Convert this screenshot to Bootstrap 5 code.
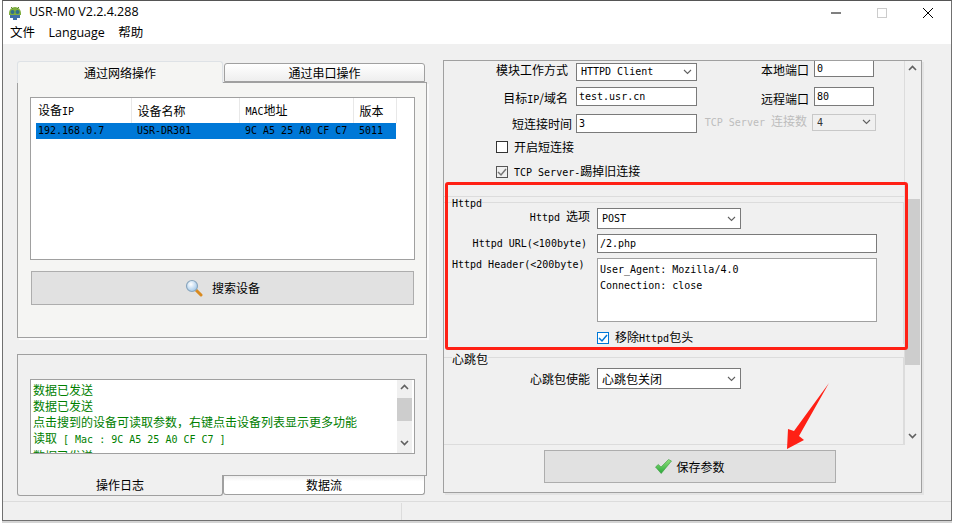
<!DOCTYPE html>
<html lang="zh-CN">
<head>
<meta charset="utf-8">
<title>USR-M0</title>
<link href="https://cdn.jsdelivr.net/npm/bootstrap@5.3.0/dist/css/bootstrap.min.css" rel="stylesheet">
<style>
html,body{margin:0;height:523px;overflow:hidden;background:#fff}
body{font-family:"Noto Sans CJK SC",sans-serif;font-size:12px;line-height:16px;color:#000}
.lt{font-family:"DejaVu Sans Mono","Noto Sans CJK SC",monospace;font-size:10px}
.win{margin-left:2px;width:950px;height:521px;background:#f0f0f0;border:1px solid #707070;border-top-color:#555;box-shadow:0 2px 0 #d4d4d4}
.tbar{height:21px;background:#fff;font-family:"Open Sans",sans-serif;font-size:12.5px}
.appico{margin-left:4px;margin-right:6px;margin-top:3px}
.wbtn{width:46px;height:21px;padding-top:2px}
.menubar{height:22px;background:#fff;font-family:"Open Sans","Noto Sans CJK SC",sans-serif;font-size:12.5px;padding-left:7px;gap:13.5px}
.client{height:457px;padding:17px 0 0 14px;gap:16px}
.leftc{width:410px}
.wtabs{border:0;flex-wrap:nowrap;height:21px;align-items:flex-start}
.wtabs .nav-link{font-size:12px;line-height:17px;color:#000;padding:0;text-align:center;border:1px solid #a0a0a0;background:linear-gradient(#fff,#eee);border-radius:3px 3px 0 0;height:19px;width:201px;margin:2px 0 0 1px}
.wtabs .nav-link.active{width:206px;height:22px;margin:0;background:#f5f5f3;border-bottom:0;position:relative;z-index:2;line-height:21px}
.panel1{height:256px;background:#f5f5f3;border:1px solid #a0a0a0;padding:14px 12px 0;box-shadow:2px 2px 0 #fafafa}
.devlist{height:163px;width:385px;background:#fff;border:1px solid #a0a0a0;padding-left:5px}
.devtbl{width:360px;table-layout:fixed;margin:0}
.devtbl.table>:not(caption)>*>*{padding:0 0 0 6px;border:0;background:transparent;color:#000;box-shadow:none}
.devtbl.table>thead>tr>th{height:25px;font-weight:400;border-right:1px solid #e8e8e8;vertical-align:middle;white-space:nowrap}
.devtbl.table>tbody>tr>td{height:16px;background:#0078d7;color:#000;white-space:nowrap;vertical-align:middle}
.devtbl.table>*>tr>*:first-child{padding-left:2px}
.winbtn{display:flex;align-items:center;justify-content:center;background:#e1e1e1;border:1px solid #adadad;border-radius:0;color:#000;font-size:12px;line-height:16px;padding:0}
.winbtn:hover{background:#e1e1e1;border-color:#adadad;color:#000}
.srch{width:383px;height:34px;margin:11px 0 0 1px;gap:9px}
.save{width:292px;height:33px;margin:5px 0 0 100px;gap:4px}
.panel2{height:122px;margin-top:16px;background:#f0f0f0;border:1px solid #a0a0a0;padding:24px 12px 0}
.logbox{width:385px;height:75px;background:#fff;border:1px solid #a0a0a0;color:#008000}
.logtext{padding:2px 0 0 2px;overflow:hidden;white-space:nowrap}
.sbar{width:15px;background:#f0f0f0;flex:none;margin-right:2px}
.sthumb{height:23px;margin-top:8px;background:#cdcdcd}
.schev{margin-top:19px}
.btabs{height:21px;align-items:flex-start;flex-wrap:nowrap;border:0}
.btabs .nav-link{font-size:12px;color:#000;padding:0;text-align:center;line-height:17px;height:19px;width:202px;border:1px solid #a0a0a0;border-top:0;border-radius:0 0 3px 3px;background:linear-gradient(#eee,#fff 30%);margin-left:0}
.btabs .nav-link.active{width:206px;height:21px;background:#f0f0f0;line-height:20px;margin-top:-1px;position:relative;z-index:2}
.rightc{width:479px;height:433px;border:1px solid #a0a0a0;box-shadow:2px 2px 0 #e4e4e4;margin-top:-1px;position:relative}
.rscroll{height:384px;width:477px}
.rinner{width:461px;height:384px;overflow:hidden;border-right:1px solid #dcdcdc;border-bottom:1px solid #dcdcdc}
.rbar{width:16px;position:relative}
.rthumb{height:166px;margin:138px 1px 0 0;background:#cdcdcd}
.rup{position:absolute;top:4px;left:3px}
.rdn{position:absolute;top:372px;left:3px}
.lab{flex:none;text-align:right;white-space:nowrap}
.lift{margin-bottom:4px}
.drop{margin-top:4px}
.wctl.form-control,.wctl.form-select{border-radius:0;border:1px solid #7a7a7a;min-height:0;box-shadow:none;color:#000;background-color:#fff;flex:none;line-height:16px}
.wctl.form-control{padding:0 2px;font-family:"DejaVu Sans Mono","Noto Sans CJK SC",monospace;font-size:10px}
.wctl.form-select{padding:0 16px 0 4px;font-size:10px;font-family:"DejaVu Sans Mono","Noto Sans CJK SC",monospace;background-image:url("data:image/svg+xml,%3csvg xmlns='http://www.w3.org/2000/svg' viewBox='0 0 9 6'%3e%3cpath fill='none' stroke='%23606060' stroke-width='1.1' d='M1 1l3.5 3.5L8 1'/%3e%3c/svg%3e");background-size:9px 6px;background-position:right 4px center}
.wctl.cjk{font-family:"Noto Sans CJK SC",sans-serif;font-size:12px}
.wctl.off{background-color:#f0f0f0;border-color:#c8c8c8;color:#333}
.row1{height:22px}.row2{height:19px;margin-top:4px}.row3{height:19px;margin-top:8px}
.w124{width:132px;padding-right:8px}
.w120{width:121px;height:18px}
.h19{height:19px}
.w113{width:112px}
.w59{width:60px;margin-left:5px}
.up7{margin-top:-7px;height:17px}
.dim{color:#bdbdbd}
.ckrow{height:12px;margin-left:52px;gap:6px}
.wck.form-check-input{width:12px;height:12px;margin:0;border:1px solid #333;border-radius:0;background-color:#fff;flex:none;box-shadow:none}
.wck.form-check-input:checked{background-color:#f0f0f0;border-color:#555;background-image:url("data:image/svg+xml,%3csvg xmlns='http://www.w3.org/2000/svg' viewBox='0 0 12 12'%3e%3cpath fill='none' stroke='%23777' stroke-width='1.5' d='M2 6l3 3 5-6'/%3e%3c/svg%3e");background-size:12px}
.wck.blue.form-check-input:checked{background-color:#fff;border-color:#0078d7;background-image:url("data:image/svg+xml,%3csvg xmlns='http://www.w3.org/2000/svg' viewBox='0 0 12 12'%3e%3cpath fill='none' stroke='%230078d7' stroke-width='1.5' d='M2 6l3 3 5-6'/%3e%3c/svg%3e")}
.sep{height:1px;background:#dcdcdc;margin-top:18px}
.fset{border:1px solid #dcdcdc;border-left:0;border-bottom:0;margin:0;padding:0;min-width:0}
.fset legend{float:none;width:auto;height:10px;margin:0 0 0 8px;padding:0;line-height:14px;white-space:nowrap;background:#f0f0f0}
.fset legend.lt{font-size:10px}
.fset legend.zh{font-size:12px}
.f2{margin-top:8px;height:200px}
.w153{width:153px}
.frow{height:21px}
.w144{width:144px;height:21px}
.w280{width:280px;height:19px}
.redbox{position:absolute;left:1px;top:121px;width:463px;height:168px;border:3px solid #ff2015;border-radius:3px;pointer-events:none;z-index:5}
.arrow{position:absolute;left:0;top:0;z-index:6;pointer-events:none}
.stat{height:19px;border-top:1px solid #dcdcdc;background:#f0f0f0}
.statgrip{width:1px;height:17px;background:#dcdcdc;margin-left:398px;margin-top:1px}
</style>
</head>
<body>
<svg class="arrow" width="954" height="523" viewBox="0 0 954 523" aria-hidden="true"><polygon fill="#ff2015" points="829,383 794,431 788,429 787,449 804,440 799,436"/></svg>
<div class="win d-flex flex-column">
  <div class="tbar d-flex align-items-center">
    <svg class="appico" width="16" height="16" viewBox="0 0 16 16" aria-hidden="true"><path fill="#7fae3e" d="M2 8a6 6 0 0 1 12 0v2H2z"/><circle cx="5.5" cy="7" r="2" fill="#2f6f8f"/><circle cx="10.5" cy="7" r="2" fill="#2f6f8f"/><path fill="#3f6fa8" d="M3 10h10v3H10v2H6v-2H3z"/><path fill="#5b8a2e" d="M4 2l2 2M12 2l-2 2" stroke="#5b8a2e"/></svg>
    <span class="flex-grow-1">USR-M0 V2.2.4.288</span>
    <span class="wbtn d-flex align-items-center justify-content-center"><svg width="10" height="10" viewBox="0 0 10 10" aria-hidden="true"><path d="M0 5h10" stroke="#000"/></svg></span>
    <span class="wbtn d-flex align-items-center justify-content-center"><svg width="10" height="10" viewBox="0 0 10 10" aria-hidden="true"><rect x=".5" y=".5" width="9" height="9" fill="none" stroke="#ccc"/></svg></span>
    <span class="wbtn d-flex align-items-center justify-content-center"><svg width="10" height="10" viewBox="0 0 10 10" aria-hidden="true"><path d="M0 0l10 10M10 0L0 10" stroke="#000"/></svg></span>
  </div>
  <div class="menubar d-flex align-items-center"><span>文件</span><span>Language</span><span>帮助</span></div>
  <div class="client d-flex">
    <div class="leftc">
      <ul class="nav nav-tabs wtabs">
        <li class="nav-item"><a class="nav-link active" href="#">通过网络操作</a></li>
        <li class="nav-item"><a class="nav-link" href="#">通过串口操作</a></li>
      </ul>
      <div class="panel1">
        <div class="devlist">
          <table class="table devtbl">
            <colgroup><col style="width:95px"><col style="width:108px"><col style="width:114px"><col style="width:43px"></colgroup>
            <thead><tr><th>设备<span class="lt">IP</span></th><th>设备名称</th><th><span class="lt">MAC</span>地址</th><th>版本</th></tr></thead>
            <tbody><tr><td class="lt">192.168.0.7</td><td class="lt">USR-DR301</td><td class="lt">9C A5 25 A0 CF C7</td><td class="lt">5011</td></tr></tbody>
          </table>
        </div>
        <button type="button" class="btn winbtn srch">
          <svg width="18" height="18" viewBox="0 0 18 18" aria-hidden="true"><defs><radialGradient id="gl" cx=".4" cy=".35" r=".7"><stop offset="0" stop-color="#fff"/><stop offset="1" stop-color="#9cc4e8"/></radialGradient></defs><path d="M10.5 10.5l5.5 5.5" stroke="#d98a20" stroke-width="3" stroke-linecap="round"/><circle cx="7" cy="7" r="5.5" fill="url(#gl)" stroke="#8aa6bd" stroke-width="1.2"/></svg>
          <span>搜索设备</span>
        </button>
      </div>
      <div class="panel2">
        <div class="logbox d-flex">
          <div class="logtext flex-grow-1">数据已发送<br>数据已发送<br>点击搜到的设备可读取参数，右键点击设备列表显示更多功能<br>读取<span class="lt"> [ Mac : 9C A5 25 A0 CF C7 ]</span><br>数据已发送</div>
          <div class="sbar">
            <svg class="d-block mx-auto mt-1" width="9" height="6" viewBox="0 0 9 6" aria-hidden="true"><path d="M1 5l3.5-3.5L8 5" fill="none" stroke="#606060" stroke-width="1.6"/></svg>
            <div class="sthumb"></div>
            <svg class="d-block mx-auto schev" width="9" height="6" viewBox="0 0 9 6" aria-hidden="true"><path d="M1 1l3.5 3.5L8 1" fill="none" stroke="#606060" stroke-width="1.6"/></svg>
          </div>
        </div>
      </div>
      <ul class="nav btabs">
        <li class="nav-item"><a class="nav-link active" href="#">操作日志</a></li>
        <li class="nav-item"><a class="nav-link" href="#">数据流</a></li>
      </ul>
    </div>
    <div class="rightc">
      <div class="redbox"></div>
      <div class="rscroll d-flex">
        <div class="rinner">
          <div class="d-flex align-items-center row1"><span class="lab w124 lift">模块工作方式</span><select class="form-select wctl w120"><option>HTTPD Client</option></select><span class="lab w113 lift">本地端口</span><input class="form-control wctl w59 up7" value="0"></div>
          <div class="d-flex align-items-center row2"><span class="lab w124 drop">目标<span class="lt">IP</span>/域名</span><input class="form-control wctl w120 h19" value="test.usr.cn"><span class="lab w113 drop">远程端口</span><input class="form-control wctl w59 h19" value="80"></div>
          <div class="d-flex align-items-center row3"><span class="lab w124" style="padding-right:4px">短连接时间</span><input class="form-control wctl w120 h19" value="3"><span class="lab w113 dim lift" style="padding-right:2px"><span class="lt">TCP Server </span>连接数</span><select class="form-select wctl off" style="width:64px;height:17px;margin-left:3px;margin-bottom:3px" disabled><option>4</option></select></div>
          <div class="d-flex align-items-center ckrow" style="margin-top:8px"><input class="form-check-input wck" type="checkbox" id="c1"><label for="c1">开启短连接</label></div>
          <div class="d-flex align-items-center ckrow" style="margin-top:13px"><input class="form-check-input wck" type="checkbox" id="c2" checked><label for="c2"><span class="lt">TCP Server-</span>踢掉旧连接</label></div>
          <div class="sep"></div>
          <fieldset class="fset">
            <legend class="lt">Httpd</legend>
            <div class="d-flex frow" style="margin-top:1px"><span class="lab w153" style="padding-right:7px"><span class="lt">Httpd </span>选项</span><select class="form-select wctl w144"><option>POST</option></select></div>
            <div class="d-flex align-items-center" style="margin-top:5px"><span class="lab w153 lt" style="padding-right:10px">Httpd URL(&lt;100byte)</span><input class="form-control wctl w280" value="/2.php"></div>
            <div class="d-flex" style="margin-top:4px"><span class="lab w153 lt" style="text-align:left;padding-left:8px">Httpd Header(&lt;200byte)</span><textarea class="form-control wctl" style="width:280px;height:64px;margin-top:1px;border-color:#a0a0a0;padding-top:3px;resize:none" rows="3">User_Agent: Mozilla/4.0
Connection: close</textarea></div>
            <div class="d-flex align-items-center" style="margin:10px 0 0 153px;gap:6px;height:12px"><input class="form-check-input wck blue" type="checkbox" id="c3" checked><label for="c3">移除<span class="lt">Httpd</span>包头</label></div>
          </fieldset>
          <fieldset class="fset f2">
            <legend class="zh">心跳包</legend>
            <div class="d-flex align-items-center frow" style="margin-top:6px"><span class="lab w153" style="padding-right:7px">心跳包使能</span><select class="form-select wctl cjk w144"><option>心跳包关闭</option></select></div>
          </fieldset>
        </div>
        <div class="rbar">
          <svg class="rup" width="9" height="6" viewBox="0 0 9 6" aria-hidden="true"><path d="M1 5l3.5-3.5L8 5" fill="none" stroke="#606060" stroke-width="1.6"/></svg>
          <div class="rthumb"></div>
          <svg class="rdn" width="9" height="6" viewBox="0 0 9 6" aria-hidden="true"><path d="M1 1l3.5 3.5L8 1" fill="none" stroke="#606060" stroke-width="1.6"/></svg>
        </div>
      </div>
      <button type="button" class="btn winbtn save">
        <svg width="17" height="15" viewBox="0 0 17 15" aria-hidden="true"><defs><linearGradient id="gc" x1="0" y1="0" x2="0" y2="1"><stop offset="0" stop-color="#8fe07a"/><stop offset="1" stop-color="#2aa83a"/></linearGradient></defs><path fill="url(#gc)" stroke="#3a9a3f" stroke-width=".6" d="M.5 8l2.8-2.5L6 8l7.5-7.5 3 1.5L6.2 14.5z"/></svg>
        <span>保存参数</span>
      </button>
    </div>
  </div>
  <div class="stat d-flex"><div class="statgrip"></div></div>
</div>
</body>
</html>
